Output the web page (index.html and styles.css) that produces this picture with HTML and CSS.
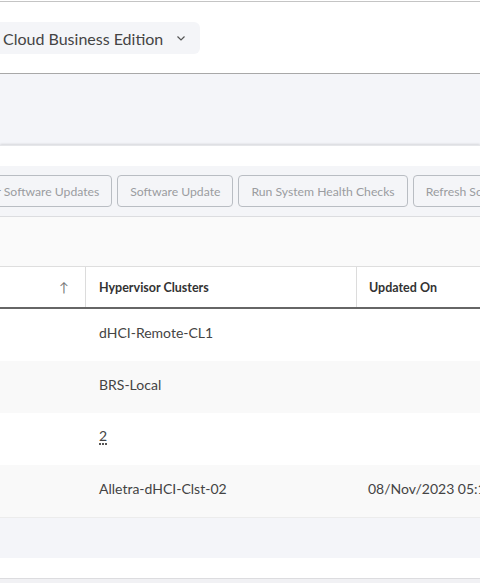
FILE: index.html
```html
<!DOCTYPE html>
<html>
<head>
<meta charset="utf-8">
<link rel="stylesheet" href="styles.css">
</head>
<body>
<div class="page">
  <header class="topbar">
    <button class="edition">
      <span class="edition-label">Cloud Business Edition</span>
      <svg class="chev" width="12" height="12" viewBox="0 0 12 12"><path d="M2.5 4.5 L6 8 L9.5 4.5" fill="none" stroke="#555" stroke-width="1.2"/></svg>
    </button>
  </header>
  <div class="band"></div>
  <section class="panel">
    <div class="panel-gap"></div>
    <div class="toolbar">
      <button class="tbtn first">Check for Software Updates</button>
      <button class="tbtn">Software Update</button>
      <button class="tbtn">Run System Health Checks</button>
      <button class="tbtn">Refresh Schedules</button>
    </div>
    <div class="filters"></div>
    <div class="table">
      <div class="row head">
        <div class="c c1"><span class="sort">&#8593;</span></div>
        <div class="c c2">Hypervisor Clusters</div>
        <div class="c c3">Updated On</div>
      </div>
      <div class="row">
        <div class="c c1"></div>
        <div class="c c2">dHCI-Remote-CL1</div>
        <div class="c c3"></div>
      </div>
      <div class="row alt">
        <div class="c c1"></div>
        <div class="c c2">BRS-Local</div>
        <div class="c c3"></div>
      </div>
      <div class="row">
        <div class="c c1"></div>
        <div class="c c2"><span class="dotted">2</span></div>
        <div class="c c3"></div>
      </div>
      <div class="row alt">
        <div class="c c1"></div>
        <div class="c c2">Alletra-dHCI-Clst-02</div>
        <div class="c c3 date">08/Nov/2023 05:14</div>
      </div>
    </div>
    <div class="footer-band"></div>
    <div class="footer-white"></div>
  </section>
  <div class="bottom"></div>
</div>
</body>
</html>
```
FILE: styles.css
```css
html, body {
  margin: 0;
  padding: 0;
  background: #ffffff;
}
body {
  font-family: Lato, "Noto Sans", sans-serif;
  color: #333;
  width: 480px;
  height: 583px;
  overflow: hidden;
}
.page {
  width: 480px;
  overflow: hidden;
}
.topbar {
  border-top: 1px solid #c4c4c4;
  margin-top: 1px;
  border-bottom: 1px solid #a8a8a8;
  display: flex;
  align-items: flex-start;
  padding-top: 20px;
  height: 51px;
}
.edition {
  margin-left: -20px;
  width: 220px;
  height: 32px;
  border: none;
  border-radius: 6px;
  background: #f4f5f8;
  display: flex;
  align-items: center;
  padding: 0 0 0 23px;
  font-family: inherit;
  font-size: 16px;
  color: #444;
}
.edition-label {
  flex: none;
}
.chev {
  margin-left: 12px;
}
.band {
  height: 71px;
  background: #f4f5f9;
}
.panel {
  background: #fff;
  box-shadow: 0 -1px 2px rgba(0,0,0,0.12);
}
.panel-gap {
  height: 20px;
  border-top: 1px solid #e6e7ea;
}
.toolbar {
  height: 50px;
  background: #f4f5f8;
  border-bottom: 1px solid #dcdde0;
  display: flex;
  align-items: center;
  gap: 5px;
  white-space: nowrap;
}
.tbtn {
  flex: none;
  height: 32px;
  padding: 0 12px;
  margin: 0;
  border: 1px solid #b9bdc3;
  border-radius: 4px;
  background: transparent;
  color: #9a9ca0;
  font-family: inherit;
  font-size: 12.2px;
}
.tbtn.first {
  margin-left: -64px;
}
.filters {
  height: 49px;
  background: #fafafa;
  border-bottom: 1px solid #dedede;
}
.row {
  display: flex;
  height: 52px;
  align-items: stretch;
  background: #fff;
}
.row.alt {
  background: #f9f9f9;
}
.row.head {
  height: 40px;
  border-bottom: 2px solid #666;
}
.c {
  display: flex;
  align-items: center;
  font-size: 14px;
  color: #444;
  box-sizing: border-box;
  flex: none;
  padding-bottom: 5px;
}
.c1 {
  width: 86px;
  justify-content: flex-end;
  padding-right: 16px;
}
.c2 {
  width: 271px;
  padding-left: 13px;
}
.c3 {
  flex: 1 1 auto;
  min-width: 0;
  padding-left: 11px;
  white-space: nowrap;
}
.head .c {
  font-weight: 700;
  font-size: 12.5px;
  color: #333;
  padding-bottom: 0;
}
.head .c1, .head .c2 {
  border-right: 1px solid #dcdcdc;
}
.head .c3 {
  padding-left: 12px;
}
.sort {
  font-weight: 400;
  color: #777;
  font-size: 13px;
}
.dotted {
  border-bottom: 2px dotted #555;
  line-height: 14px;
}
.footer-band {
  height: 40px;
  background: #f4f5f9;
  border-top: 1px solid #ececec;
}
.footer-white {
  height: 20px;
  background: #fff;
}
.bottom {
  height: 10px;
  border-top: 1px solid #dcdcdf;
  background: #f1f1f4;
}
```
